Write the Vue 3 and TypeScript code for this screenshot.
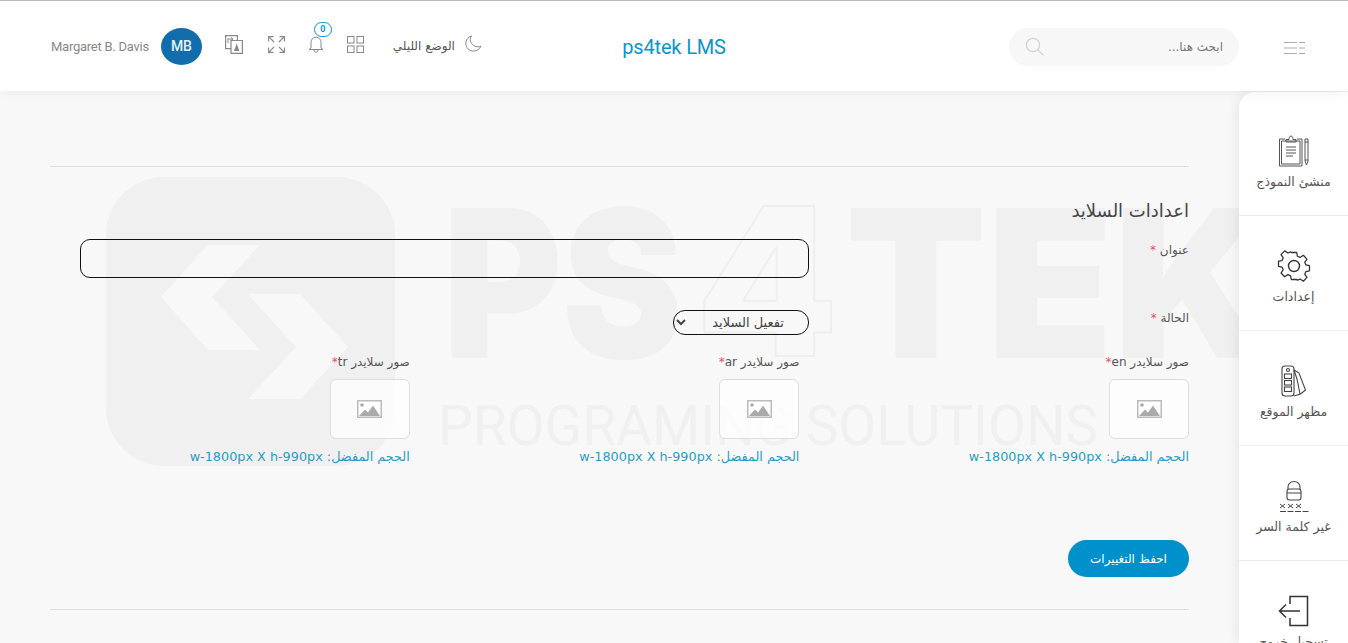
<script setup lang="ts">
const sliders = [
  { lang: 'en' },
  { lang: 'ar' },
  { lang: 'tr' },
];
</script>

<template>
  <div class="page" dir="rtl">
    <header class="topbar">
      <div class="top-right">
        <svg class="menu-icon" width="21" height="14" viewBox="0 0 21 14" fill="none" stroke="#aaa" stroke-width="1">
          <path d="M0 1.5h13M15 1.5h6M0 7h13M15 7h6M0 12.5h13M15 12.5h6" />
        </svg>
        <div class="search">
          <span class="search-text">ابحث هنا...</span>
          <svg width="20" height="20" viewBox="0 0 20 20" fill="none" stroke="#d4d4d4" stroke-width="1.3">
            <circle cx="8" cy="8" r="6.6" />
            <path d="M13 13l5.5 5.5" />
          </svg>
        </div>
      </div>

      <div class="brand">ps4tek LMS</div>

      <div class="top-left">
        <svg class="moon" width="17" height="17" viewBox="0 0 17 17" fill="none" stroke="#888" stroke-width="1">
          <path d="M6.5 1C3 2 .8 5 .8 8.5c0 4.2 3.4 7.6 7.6 7.6 3.4 0 6.3-2 7.6-5-1 .5-2 .7-3.1.7-4.1 0-7.6-3.3-7.6-7.3C5.3 3.3 5.7 2 6.5 1z" />
        </svg>
        <span class="night-text">الوضع الليلي</span>
        <svg class="grid-icon" width="17" height="17" viewBox="0 0 17 17" fill="none" stroke="#888" stroke-width="1">
          <rect x=".5" y=".5" width="6.5" height="6.5" />
          <rect x="10" y=".5" width="6.5" height="6.5" />
          <rect x=".5" y="10" width="6.5" height="6.5" />
          <rect x="10" y="10" width="6.5" height="6.5" />
        </svg>
        <div class="bell">
          <span class="badge">0</span>
          <svg width="16" height="17" viewBox="0 0 16 17" fill="none" stroke="#888" stroke-width="1">
            <path d="M3 12V6.5C3 3.5 5 1.2 8 1.2s5 2.3 5 5.3V12l2 1.5H1L3 12z" />
            <path d="M6 14c0 1.3.9 2.2 2 2.2s2-.9 2-2.2" />
          </svg>
        </div>
        <svg class="expand" width="17" height="17" viewBox="0 0 17 17" fill="none" stroke="#888" stroke-width="1.1">
          <path d="M11.5.6h4.900v4.900M16.400.6L11 6M5.500.6H.6v4.900M.6.6L6 6M11.500 16.400h4.900v-4.900M16.400 16.400L11 11M5.500 16.400H.6v-4.900M.6 16.400L6 11" />
        </svg>
        <svg class="translate" width="19" height="19" viewBox="0 0 19 19" fill="none" stroke="#888" stroke-width="1.2">
          <path d="M.6.6h11.800v13H.6z" />
          <path d="M6 5.500h11.400v12.900H6z" fill="#fff" />
          <path d="M2.500 4h5M6 2.500L8 4 6 5.500M3 4v4" stroke-width="1" />
          <path d="M9 16l2.700-7.500L14.400 16z" fill="#888" stroke="none" />
        </svg>
        <div class="avatar">MB</div>
        <span class="user-name">Margaret B. Davis</span>
      </div>
    </header>

    <div class="body">
      <aside class="sidebar">
        <div class="side-item">
          <svg width="32" height="32" viewBox="0 0 32 32" fill="none" stroke="#555" stroke-width="1">
            <path d="M7 4H1.500v27H24V4h-5" />
            <path d="M3.500 6H22v23H3.500z" />
            <path d="M8 7V4.500h3C11 3 11.500 1 13 1s2 2 2 3.500h3V7z" />
            <path d="M8 12h10M8 15h10M8 18h10M8 21h7" />
            <path d="M27 4h3v22l-1.500 4L27 26z" />
            <path d="M27 7h3M27 25h3" />
          </svg>
          <span class="side-label">منشئ النموذج</span>
        </div>
        <div class="side-item">
          <svg width="34" height="34" viewBox="0 0 34 34" fill="none" stroke="#333" stroke-width="1.4" stroke-linejoin="round">
            <circle cx="17" cy="17" r="5.5" />
            <path d="M14 2h6l.8 4.200 3 1.300 3.600-2.400 4 4.200-2.400 3.500 1.200 3 4 .8v5.800l-4 .8-1.200 3 2.400 3.500-4 4.200-3.600-2.400-3 1.300L20 32h-6l-.8-4.100-3-1.300-3.600 2.400-4-4.200 2.400-3.500-1.200-3-4-.8v-5.800l4-.8 1.200-3-2.400-3.500 4-4.200 3.600 2.400 3-1.300z" transform="translate(1.700 1.700) scale(.9)" />
          </svg>
          <span class="side-label">إعدادات</span>
        </div>
        <div class="side-item">
          <svg width="26" height="32" viewBox="0 0 26 32" fill="none" stroke="#444" stroke-width="1.1">
            <rect x="1" y="1" width="12" height="30" rx="3" />
            <circle cx="7" cy="5" r="1.500" />
            <rect x="3.500" y="9" width="7" height="4.500" />
            <rect x="3.500" y="15.500" width="7" height="4.500" />
            <rect x="3.500" y="22" width="7" height="4.500" />
            <path d="M13 5l5 3 6.500 17-5 4-6.500 2" />
            <path d="M13 5l3 9 3 15" />
          </svg>
          <span class="side-label">مظهر الموقع</span>
        </div>
        <div class="side-item">
          <svg width="32" height="32" viewBox="0 0 32 32" fill="none" stroke="#444" stroke-width="1.1">
            <rect x="9" y="9" width="14" height="11" rx="2.500" />
            <path d="M10 9V7c0-3 2.500-5.500 6-5.500S22 4 22 7v2M9 13h14" />
            <path d="M2 24l5 4M7 24l-5 4M10 24l5 4M15 24l-5 4M18 24l5 4M23 24l-5 4" stroke-width="1" />
            <path d="M2 31.500h29" stroke-width="1" stroke-dasharray="6 1.500" />
          </svg>
          <span class="side-label">غير كلمة السر</span>
        </div>
        <div class="side-item">
          <svg width="32" height="32" viewBox="0 0 32 32" fill="none" stroke="#333" stroke-width="1.5">
            <path d="M12 9V1.500h17.500v29H12V23" />
            <path d="M22 16H2M8 9.500L1.500 16 8 22.500" />
          </svg>
          <span class="side-label">تسجيل خروج</span>
        </div>
      </aside>

      <main class="content">
        <svg class="watermark" width="1240" height="552" viewBox="0 0 1240 552">
          <rect x="106" y="86" width="289" height="289" rx="58" fill="#f0f0f0" />
          <path d="M208 154h52l-48 52 48 53h-52l-47-53zM248 203h52l48 53-48 52h-52l48-52z" fill="#f8f8f8" />
          <text class="wm-big" x="443" y="267" textLength="240" lengthAdjust="spacingAndGlyphs">PS</text>
          <text class="wm-four" x="696" y="265" textLength="142" lengthAdjust="spacingAndGlyphs">4</text>
          <text class="wm-big" x="845" y="267" textLength="425" lengthAdjust="spacingAndGlyphs">TEK</text>
          <text class="wm-small" x="438" y="354" textLength="660" lengthAdjust="spacingAndGlyphs">PROGRAMING SOLUTIONS</text>
        </svg>

        <div class="content-inner">
          <hr class="line" />
          <h2 class="title">اعدادات السلايد</h2>

          <div class="form-row">
            <label class="field-label">عنوان <span class="req">*</span></label>
            <input class="text-input" type="text" />
          </div>
          <div class="form-row status-row">
            <label class="field-label">الحالة <span class="req">*</span></label>
            <select class="status-select">
              <option>تفعيل السلايد</option>
            </select>
          </div>

          <div class="sliders">
            <div v-for="s in sliders" :key="s.lang" class="slider-col">
              <div class="slider-label">صور سلايدر {{ s.lang }}<span class="req">*</span></div>
              <div class="img-box">
                <svg width="25" height="18" viewBox="0 0 25 18">
                  <rect x=".75" y=".75" width="23.5" height="16.5" fill="#fff" stroke="#bbb" stroke-width="1.5" />
                  <circle cx="5" cy="5" r="1.8" fill="#aaa" />
                  <path d="M2 16l6-6.500 3 3 5-7 7 10.500z" fill="#aaa" />
                </svg>
              </div>
              <div class="hint">الحجم المفضل: w-1800px X h-990px</div>
            </div>
          </div>

          <button class="save-btn" type="button">احفظ التغييرات</button>
          <hr class="line bottom-line" />
        </div>
      </main>
    </div>
  </div>
</template>

<style>
html, body {
  margin: 0;
  background: #f8f8f8;
}
</style>

<style scoped>
.page {
  height: 100vh;
  overflow: hidden;
  background: #f8f8f8;
  font-family: "DejaVu Sans", sans-serif;
  color: #444;
  display: flex;
  flex-direction: column;
}
.topbar {
  height: 90px;
  flex: none;
  border-top: 1px solid #b9b9b9;
  background: #fff;
  box-shadow: 0 0 12px rgba(0, 0, 0, 0.07);
  display: grid;
  grid-template-columns: 1fr auto 1fr;
  align-items: center;
  position: relative;
  z-index: 3;
}
.top-right {
  display: flex;
  align-items: center;
  gap: 45px;
  padding-right: 43px;
}
.menu-icon {
  margin-top: 3px;
}
.search {
  width: 230px;
  height: 38px;
  margin-top: 1px;
  box-sizing: border-box;
  padding: 0 16px;
  background: #f7f7f7;
  border-radius: 19px;
  display: flex;
  align-items: center;
  justify-content: space-between;
}
.search-text {
  font-size: 12px;
  color: #777;
}
.brand {
  font-family: "Roboto", sans-serif;
  font-size: 20px;
  letter-spacing: -0.15px;
  color: #0b95cc;
  direction: ltr;
  margin-top: 1px;
}
.top-left {
  display: flex;
  align-items: center;
  justify-content: flex-start;
  margin-right: auto;
  padding-left: 51px;
}
.moon {
  margin-top: -6px;
}
.night-text {
  width: 63px;
  margin-right: 10px;
  white-space: nowrap;
  font-size: 12px;
  color: #555;
}
.grid-icon {
  margin-right: 28px;
  margin-top: -4px;
}
.bell {
  position: relative;
  margin-right: 23px;
  margin-top: -4px;
  height: 17px;
}
.badge {
  position: absolute;
  top: -14px;
  right: -8px;
  width: 18px;
  height: 15px;
  box-sizing: border-box;
  border: 1px solid #0b95cc;
  border-radius: 8px;
  background: #fff;
  color: #0b95cc;
  font-family: "Roboto", sans-serif;
  font-weight: 700;
  font-size: 9px;
  line-height: 13px;
  text-align: center;
}
.expand {
  margin-right: 23px;
  margin-top: -4px;
}
.translate {
  margin-right: 24px;
  margin-top: -3px;
}
.avatar {
  width: 41px;
  height: 37px;
  margin-right: 23px;
  border-radius: 50%;
  background: #126dad;
  color: #e8f1f7;
  font-family: "Roboto", sans-serif;
  font-size: 14px;
  font-weight: 500;
  line-height: 37px;
  text-align: center;
}
.user-name {
  margin-right: 12px;
  white-space: nowrap;
  font-family: "Roboto", sans-serif;
  font-size: 13px;
  letter-spacing: -0.25px;
  color: #888;
}
.body {
  flex: 1;
  min-height: 0;
  display: flex;
  position: relative;
}
.sidebar {
  width: 109px;
  flex: none;
  margin-top: 1px;
  padding-top: 9px;
  background: #fff;
  border-top-left-radius: 16px;
  box-shadow: 0 0 14px rgba(0, 0, 0, 0.1);
  position: relative;
  z-index: 2;
}
.side-item {
  height: 115px;
  box-sizing: border-box;
  padding-top: 33px;
  border-bottom: 1px solid #eee;
  display: flex;
  flex-direction: column;
  align-items: center;
}
.side-item svg {
  height: 34px;
  flex: none;
}
.side-label {
  margin-top: 4px;
  font-size: 12.5px;
  line-height: 20px;
  color: #555;
  white-space: nowrap;
}
.content {
  flex: 1;
  min-width: 0;
  position: relative;
}
.watermark {
  position: absolute;
  top: 0;
  left: 0;
  direction: ltr;
}
.wm-big {
  font-family: "Inter", sans-serif;
  font-weight: 900;
  font-size: 206px;
  fill: #f0f0f0;
}
.wm-four {
  font-family: "Inter", sans-serif;
  font-weight: 900;
  font-size: 206px;
  fill: none;
  stroke: #eeeeee;
  stroke-width: 2;
  stroke-linejoin: round;
}
.wm-small {
  font-family: "Roboto", sans-serif;
  font-weight: 400;
  font-size: 56px;
  fill: #f0f0f0;
}
.content-inner {
  position: relative;
  padding: 75px 50px 0;
}
.line {
  margin: 0;
  border: 0;
  border-top: 1px solid #ddd;
}
.title {
  margin: 32px 0 16px;
  font-size: 18px;
  font-weight: 400;
  line-height: 24px;
  color: #444;
}
.form-row {
  display: grid;
  grid-template-columns: 380px 1fr;
  align-items: start;
}
.status-row {
  margin-top: 29px;
}
.field-label {
  padding-top: 1px;
  font-size: 12px;
  line-height: 20px;
  color: #555;
}
.req {
  color: #e0506a;
}
.text-input {
  width: 729px;
  height: 39px;
  box-sizing: border-box;
  border: 1px solid #111;
  border-radius: 10px;
  background: transparent;
}
.status-select {
  width: 136px;
  height: 25px;
  margin-top: 3px;
  padding: 0 20px 0 0;
  border: 1px solid #111;
  border-radius: 12px;
  background: transparent;
  font-family: "DejaVu Sans", sans-serif;
  font-size: 13px;
  color: #444;
}
.sliders {
  display: grid;
  grid-template-columns: repeat(3, 389.6px);
  margin-top: 16px;
}
.slider-label {
  padding-top: 1px;
  font-size: 12px;
  line-height: 20px;
  color: #555;
}
.img-box {
  width: 80px;
  height: 60px;
  margin-top: 7px;
  box-sizing: border-box;
  border: 1px solid #ddd;
  border-radius: 6px;
  background: rgba(255, 255, 255, 0.7);
  display: flex;
  align-items: center;
  justify-content: center;
}
.hint {
  margin-top: 8px;
  font-size: 12.8px;
  line-height: 20px;
  color: #2a9cc8;
  white-space: nowrap;
}
.save-btn {
  display: block;
  width: 121px;
  height: 37px;
  margin-top: 73px;
  padding: 0;
  border: 0;
  border-radius: 19px;
  background: #0090cc;
  color: #fff;
  font-family: "DejaVu Sans", sans-serif;
  font-size: 12px;
}
.bottom-line {
  margin-top: 32px;
}
</style>
